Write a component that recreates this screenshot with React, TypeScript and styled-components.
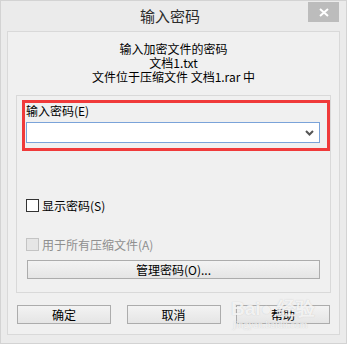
import React from "react";
import styled, { createGlobalStyle } from "styled-components";

const GlobalStyle = createGlobalStyle`
  html, body {
    margin: 0;
    padding: 0;
    background: #ffffff;
  }
  * {
    box-sizing: border-box;
  }
`;

const Window = styled.div`
  position: relative;
  width: 347px;
  height: 344px;
  background: #ebebeb;
  border: 1px solid #d3d3d3;
  padding: 0 6px 8px 6px;
  display: flex;
  flex-direction: column;
  font-family: "Noto Sans CJK SC", "Liberation Sans", sans-serif;
  font-size: 12px;
  color: #000;
`;

const TitleBar = styled.div`
  height: 30px;
  display: grid;
  grid-template-columns: 1fr auto 1fr;
  margin: 0 -6px;
  padding-right: 7px;
`;

const Title = styled.div`
  grid-column: 2;
  font-size: 15px;
  line-height: 30px;
  color: #2b2b2b;
`;

const CloseButton = styled.div`
  grid-column: 3;
  justify-self: end;
  margin-top: 1px;
  width: 31px;
  height: 20px;
  background: #bcbcbc;
  display: flex;
  align-items: center;
  justify-content: center;
`;

const Client = styled.div`
  flex: 1;
  background: #f0f0f0;
  border: 1px solid #d9d9d9;
  display: flex;
  flex-direction: column;
  padding: 0 8px;
`;

const Header = styled.div`
  padding-top: 10px;
  text-align: center;
  line-height: 14px;
`;

const Group = styled.div`
  margin-top: 11px;
  height: 198px;
  border: 1px solid #d9d9d9;
  padding: 4px 0 0 5px;
  display: flex;
  flex-direction: column;
`;

const Highlight = styled.div`
  height: 51px;
  border: 3px solid #f03a3a;
  padding-left: 1px;
`;

const Label = styled.div`
  line-height: 16px;
  height: 16px;
`;

const ComboBox = styled.div`
  margin-top: 3px;
  width: 294px;
  height: 21px;
  background: #fff;
  border: 1px solid #7aa3d9;
  display: flex;
  align-items: center;
  justify-content: flex-end;
  padding-right: 5px;
`;

const CheckRow = styled.div<{ $top: number; $disabled?: boolean }>`
  margin-top: ${(p) => p.$top}px;
  margin-left: 4px;
  height: 13px;
  display: flex;
  align-items: center;
  gap: 3px;
  color: ${(p) => (p.$disabled ? "#8f8f8f" : "#000")};
  line-height: 13px;
`;

const Box = styled.span<{ $disabled?: boolean }>`
  width: 13px;
  height: 13px;
  border: 1px solid ${(p) => (p.$disabled ? "#c4c4c4" : "#333")};
  background: ${(p) => (p.$disabled ? "#e6e6e6" : "#fff")};
`;

const Button = styled.div<{ $width: number }>`
  width: ${(p) => p.$width}px;
  height: 19px;
  border: 1px solid #acacac;
  background: linear-gradient(#f3f3f3, #e5e5e5);
  display: flex;
  align-items: center;
  justify-content: center;
  line-height: 17px;
`;

const ManageButton = styled(Button)`
  margin-top: 9px;
  margin-left: 5px;
`;

const ButtonRow = styled.div`
  margin: 12px 1px 0 1px;
  display: flex;
  justify-content: space-between;
`;

const Watermark = styled.div`
  position: absolute;
  left: 230px;
  top: 298px;
  color: rgba(255, 255, 255, 0.8);
  text-shadow: 0 0 1px rgba(150, 150, 150, 0.5);
  pointer-events: none;
  .brand {
    font-family: "Liberation Sans", sans-serif;
    font-size: 19px;
    font-weight: bold;
    line-height: 20px;
  }
  .site {
    font-family: "Liberation Serif", serif;
    font-size: 10px;
    line-height: 11px;
    padding-left: 2px;
  }
`;

const App = () => {
  return (
    <>
      <GlobalStyle />
      <Window>
        <TitleBar>
          <Title>输入密码</Title>
          <CloseButton>
            <svg width="10" height="9" viewBox="0 0 10 9">
              <path d="M1 1 L9 8 M9 1 L1 8" stroke="#fff" strokeWidth="2" />
            </svg>
          </CloseButton>
        </TitleBar>
        <Client>
          <Header>
            <div>输入加密文件的密码</div>
            <div>文档1.txt</div>
            <div>文件位于压缩文件 文档1.rar 中</div>
          </Header>
          <Group>
            <Highlight>
              <Label>输入密码(E)</Label>
              <ComboBox>
                <svg width="9" height="6" viewBox="0 0 9 6">
                  <path d="M1 1 L4.5 4.5 L8 1" stroke="#555" strokeWidth="2" fill="none" />
                </svg>
              </ComboBox>
            </Highlight>
            <CheckRow $top={48}>
              <Box />
              <span>显示密码(S)</span>
            </CheckRow>
            <CheckRow $top={26} $disabled>
              <Box $disabled />
              <span>用于所有压缩文件(A)</span>
            </CheckRow>
            <ManageButton $width={293}>管理密码(O)...</ManageButton>
          </Group>
          <ButtonRow>
            <Button $width={94}>确定</Button>
            <Button $width={94}>取消</Button>
            <Button $width={94}>帮助</Button>
          </ButtonRow>
        </Client>
        <Watermark>
          <div className="brand">Bai● 经验</div>
          <div className="site">jingyan.baidu.com</div>
        </Watermark>
      </Window>
    </>
  );
};

export default App;
